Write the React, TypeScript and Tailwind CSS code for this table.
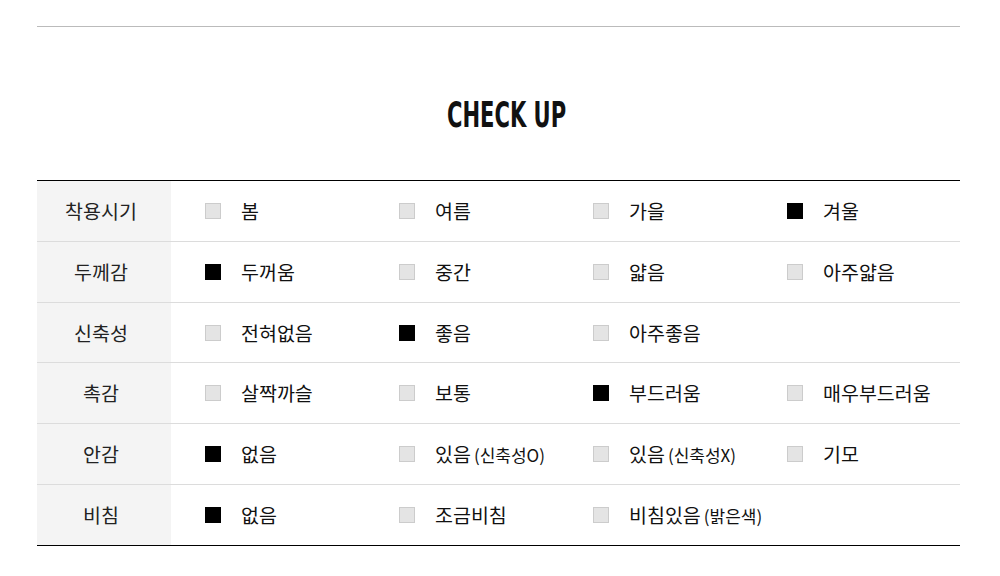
const ROWS: { title: string; h: number; options: { label: string; sub?: string; checked?: boolean }[] }[] = [
  {
    title: '착용시기',
    h: 61,
    options: [{ label: '봄' }, { label: '여름' }, { label: '가을' }, { label: '겨울', checked: true }],
  },
  {
    title: '두께감',
    h: 61,
    options: [{ label: '두꺼움', checked: true }, { label: '중간' }, { label: '얇음' }, { label: '아주얇음' }],
  },
  {
    title: '신축성',
    h: 60,
    options: [{ label: '전혀없음' }, { label: '좋음', checked: true }, { label: '아주좋음' }],
  },
  {
    title: '촉감',
    h: 61,
    options: [{ label: '살짝까슬' }, { label: '보통' }, { label: '부드러움', checked: true }, { label: '매우부드러움' }],
  },
  {
    title: '안감',
    h: 61,
    options: [
      { label: '없음', checked: true },
      { label: '있음', sub: '(신축성O)' },
      { label: '있음', sub: '(신축성X)' },
      { label: '기모' },
    ],
  },
  {
    title: '비침',
    h: 61,
    options: [{ label: '없음', checked: true }, { label: '조금비침' }, { label: '비침있음', sub: '(밝은색)' }],
  },
];

function Box({ checked }: { checked?: boolean }) {
  return checked ? (
    <span className="block w-4 h-4 bg-black shrink-0" />
  ) : (
    <span className="block w-4 h-4 bg-[#e4e4e4] border border-[#cccccc] shrink-0" />
  );
}

export default function App() {
  return (
    <div
      className="w-[1000px] h-[576px] bg-white pt-[26px] text-[#111]"
      style={{ fontFamily: '"Noto Sans CJK KR", "Noto Sans", sans-serif' }}
    >
      <div className="ml-[37px] w-[923px] border-t border-[#bbbbbb]" />

      <div className="mt-[70px] h-[36px] flex justify-center pl-[13px]">
        <h2
          className="text-[36px] leading-[36px] font-bold text-[#111] scale-x-[0.65]"
          style={{ fontFamily: '"DejaVu Sans Condensed", "DejaVu Sans", sans-serif', fontStretch: 'condensed' }}
        >
          CHECK UP
        </h2>
      </div>

      <div className="ml-[37px] w-[923px] mt-[47px] border-t border-black">
        {ROWS.map((row, i) => (
          <div
            key={row.title}
            style={{ height: row.h }}
            className={`flex border-b ${i === ROWS.length - 1 ? 'border-black' : 'border-[#dcdcdc]'}`}
          >
            <div className="w-[134px] shrink-0 bg-[#f4f4f4] flex items-center justify-center pr-[6px] text-[19.5px] text-[#222]">
              {row.title}
            </div>
            <div className="flex-1 pl-[34px] grid grid-cols-[repeat(4,194px)] items-center">
              {row.options.map((opt, j) => (
                <div key={j} className="flex items-center gap-5">
                  <Box checked={opt.checked} />
                  <span className="text-[19.5px] leading-none whitespace-nowrap">
                    {opt.label}
                    {opt.sub && <span className="text-[17px] ml-[3px]">{opt.sub}</span>}
                  </span>
                </div>
              ))}
            </div>
          </div>
        ))}
      </div>
    </div>
  );
}
